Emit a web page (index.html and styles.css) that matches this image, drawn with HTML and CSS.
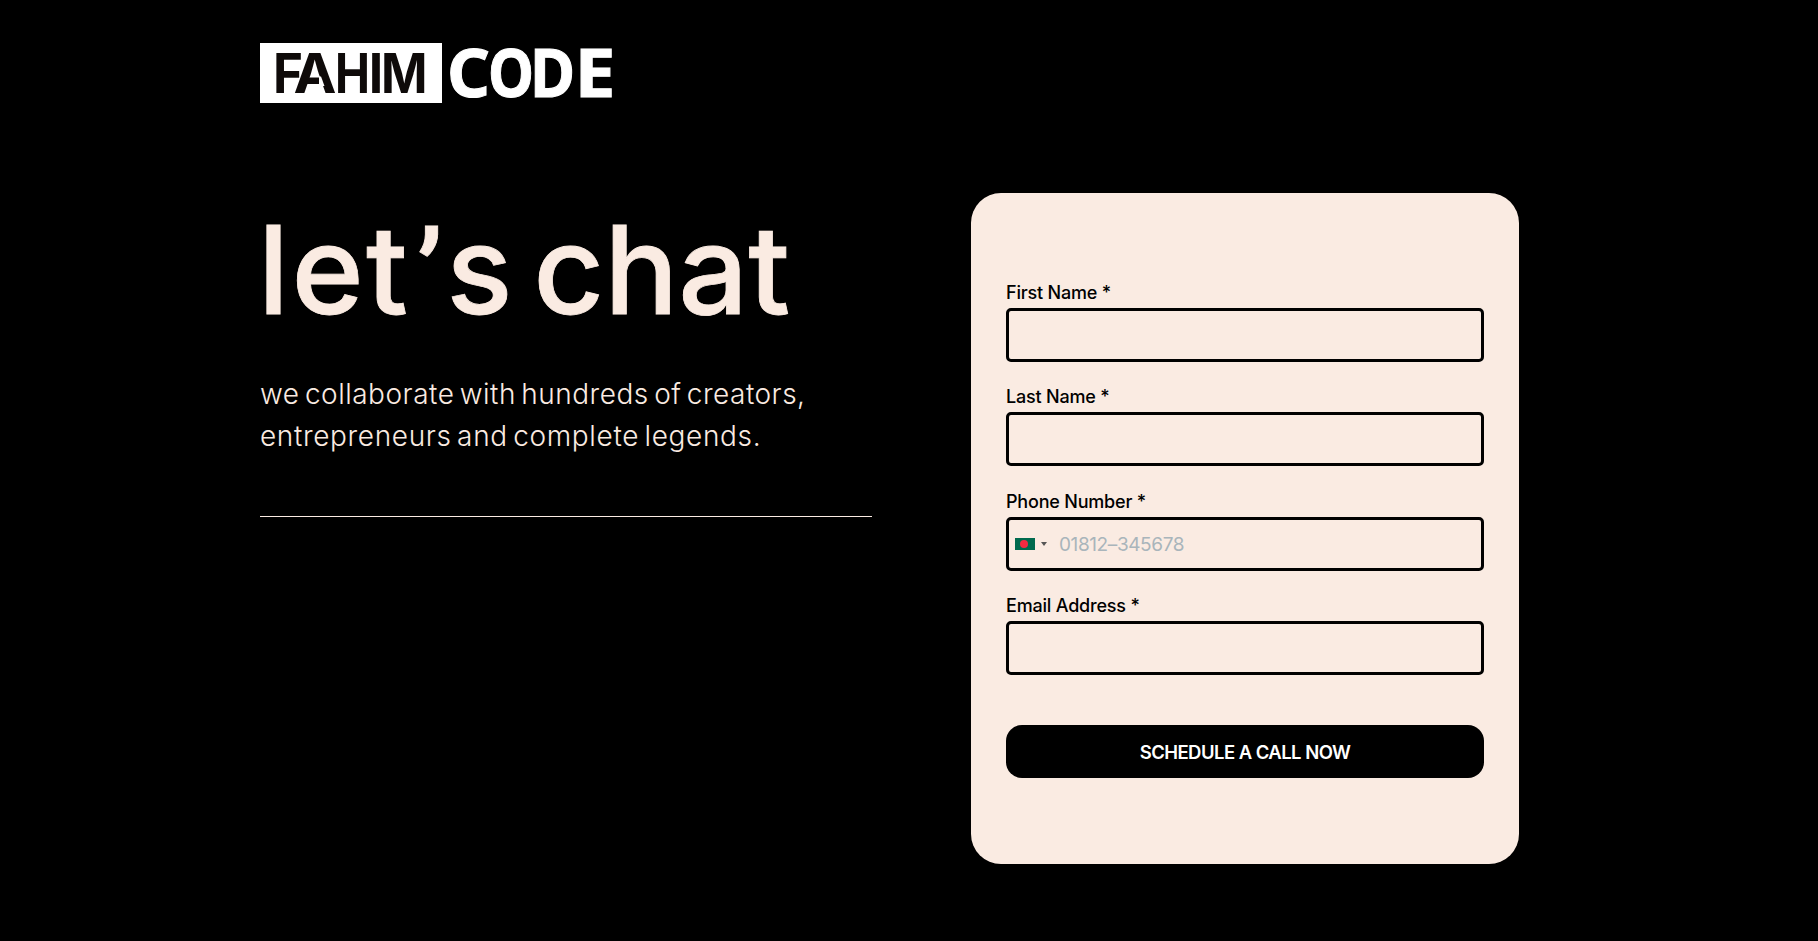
FILE: index.html
```html
<!DOCTYPE html>
<html lang="en">
<head>
<meta charset="utf-8">
<title>let’s chat</title>
<link rel="stylesheet" href="styles.css">
</head>
<body>
<div class="page">
  <header class="header">
    <svg class="logo" width="354" height="60" viewBox="0 0 354 60" role="img" aria-label="FAHIM CODE">
      <rect width="182" height="60" fill="#fff"/>
      <g class="logo-name">
        <text x="13" y="50" textLength="30" lengthAdjust="spacingAndGlyphs">F</text>
        <text x="33.5" y="50" textLength="43" lengthAdjust="spacingAndGlyphs">A</text>
        <text x="75" y="50" textLength="35" lengthAdjust="spacingAndGlyphs">H</text>
        <text x="108.8" y="50" textLength="14.5" lengthAdjust="spacingAndGlyphs">I</text>
        <text x="121" y="50" textLength="46.5" lengthAdjust="spacingAndGlyphs">M</text>
      </g>
      <path d="M59 33.5h2l3.5 9.5H59z" fill="#fff"/>
      <g class="logo-code">
        <text x="187" y="54" textLength="43" lengthAdjust="spacingAndGlyphs">C</text>
        <text x="228" y="54" textLength="46" lengthAdjust="spacingAndGlyphs">O</text>
        <text x="270" y="54" textLength="45" lengthAdjust="spacingAndGlyphs">D</text>
        <text x="314.5" y="54" textLength="41" lengthAdjust="spacingAndGlyphs">E</text>
      </g>
    </svg>
  </header>
  <main class="content">
    <section class="intro">
      <h1 class="title"><span class="title-start">let</span><span class="apostrophe">’</span>s chat</h1>
      <p class="lead"><span class="lead-first">we collaborate with hundreds of creators,</span><br><span class="lead-second">entrepreneurs and complete legends.</span></p>
      <hr class="rule">
    </section>
    <form class="card">
      <div class="field"><label class="label" for="first">First Name *</label><input class="input" id="first" type="text"></div>
      <div class="field"><label class="label" for="last">Last Name *</label><input class="input" id="last" type="text"></div>
      <div class="field">
        <label class="label" for="phone">Phone Number *</label>
        <div class="input phone">
          <svg class="flag" width="20" height="12" viewBox="0 0 20 12"><rect width="20" height="12" fill="#006a4e"/><circle cx="9" cy="6" r="4" fill="#f42a41"/></svg>
          <span class="caret"></span>
          <input class="phone-input" id="phone" type="tel" placeholder="01812–345678">
        </div>
      </div>
      <div class="field"><label class="label" for="email">Email Address *</label><input class="input" id="email" type="email"></div>
      <button class="submit" type="button">SCHEDULE A CALL NOW</button>
    </form>
  </main>
</div>
</body>
</html>
```
FILE: styles.css
```css
* { box-sizing: border-box; }
body {
  margin: 0;
  background: #000;
  color: #faebe2;
  font-family: Inter, sans-serif;
}
.page { width: 1259px; margin-left: 260px; padding-top: 43px; }
.header { height: 150px; }
.logo { display: block; overflow: visible; }
.logo-name { font: 700 55px Inter, sans-serif; fill: #0e0a09; }
.logo-code { font: 700 67px "Noto Sans", sans-serif; fill: #fff; stroke: #fff; stroke-width: 1; }
.content { display: grid; grid-template-columns: 612px 548px; column-gap: 99px; align-items: start; }
.intro { padding-top: 12px; }
.title {
  height: 130px;
  margin: 0;
  font-size: 123px;
  font-weight: 500;
  line-height: 129px;
  letter-spacing: 0;
  word-spacing: -12px;
  white-space: nowrap;
  text-indent: -2px;
  -webkit-text-stroke: 0.8px #faebe2;
}
.title-start { letter-spacing: 2.4px; }
.apostrophe {
  display: inline-block;
  width: 36px;
  font-family: Roboto, sans-serif;
  line-height: 100px;
  text-align: center;
  text-indent: 3px;
  transform: translateY(4px);
}
.lead {
  margin: 38px 0 0;
  font-size: 28px;
  font-weight: 300;
  line-height: 42px;
  word-spacing: -3px;
  white-space: nowrap;
}
.lead-first { letter-spacing: 0.5px; }
.lead-second { letter-spacing: 0.64px; }
.rule { margin: 59px 0 0; border: 0; height: 1px; background: #faebe2; }
.card {
  height: 671px;
  padding: 88px 35px 0;
  border-radius: 30px;
  background: #faebe2;
  color: #000;
}
.field { height: 104.4px; }
.label {
  display: block;
  height: 27px;
  line-height: 24px;
  font-size: 18px;
  font-weight: 500;
  letter-spacing: -0.2px;
}
.input {
  display: block;
  width: 478px;
  height: 54px;
  border: 3px solid #000;
  border-radius: 5px;
  background: transparent;
}
.phone { display: flex; align-items: center; padding-left: 6px; }
.caret {
  margin-left: 6px;
  border: 3px solid transparent;
  border-top: 4px solid #555;
  border-bottom: 0;
}
.phone-input {
  margin-left: 12px;
  padding: 1px 0 0;
  border: 0;
  width: 300px;
  background: transparent;
  font: 400 19px Inter, sans-serif;
  letter-spacing: -0.4px;
}
.phone-input::placeholder { color: #a9b5bb; opacity: 1; }
.submit {
  display: block;
  width: 478px;
  height: 53px;
  margin-top: 26px;
  padding: 1px 0 0;
  border: 0;
  border-radius: 16px;
  background: #000;
  color: #fff;
  font: 600 18.5px Inter, sans-serif;
  letter-spacing: -0.55px;
}
```
